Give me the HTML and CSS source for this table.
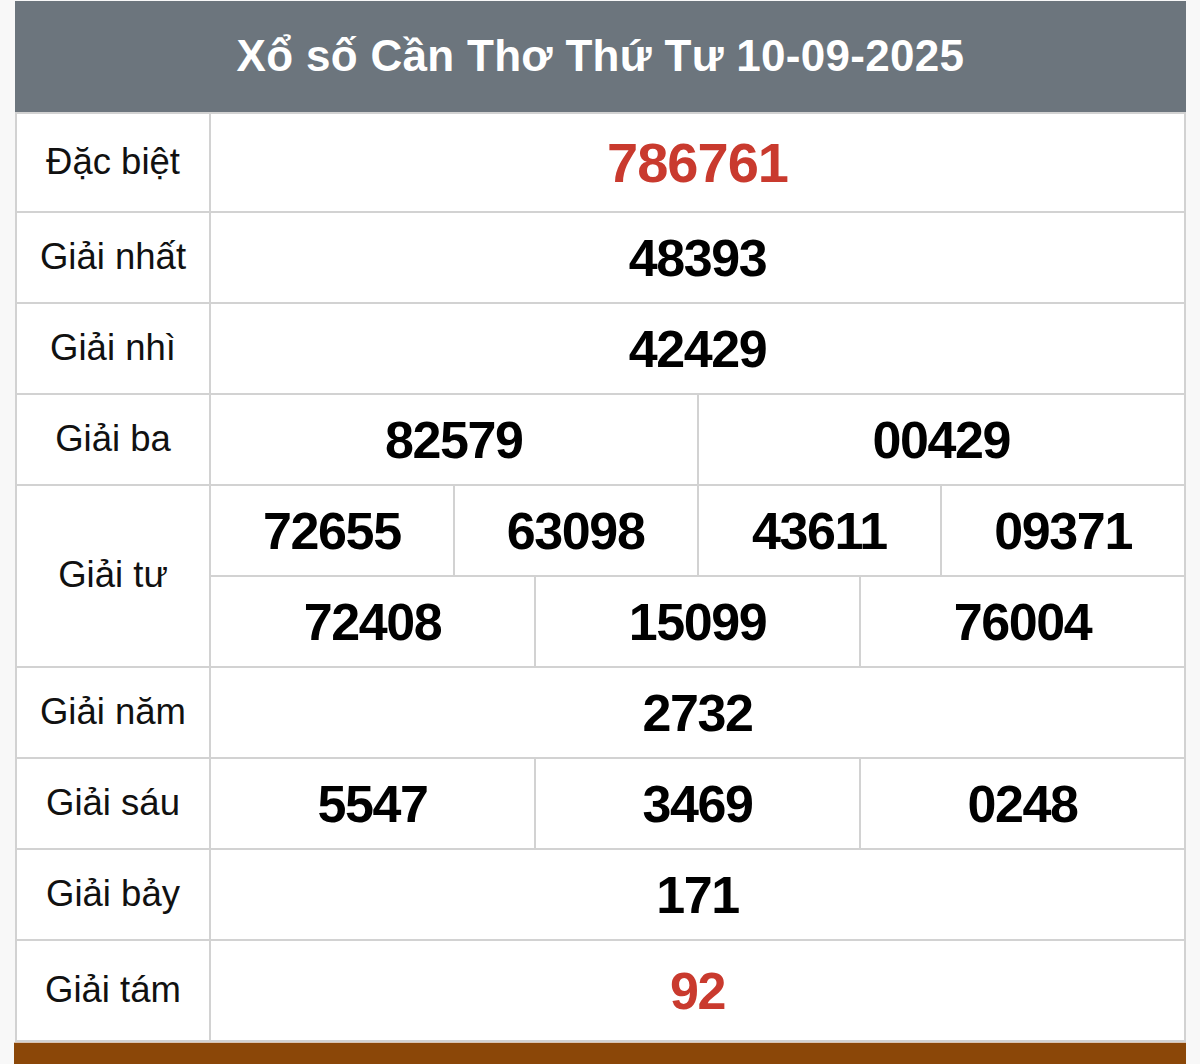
FILE: index.html
```html
<!DOCTYPE html>
<html lang="vi">
<head>
<meta charset="utf-8">
<title>Xổ số Cần Thơ</title>
<link rel="stylesheet" href="styles.css">
</head>
<body>
<div class="wrap">
  <div class="title">Xổ số Cần Thơ Thứ Tư 10-09-2025</div>
  <div class="board">
    <div class="lbl r1">Đặc biệt</div>
    <div class="val s12 red big">786761</div>

    <div class="lbl">Giải nhất</div>
    <div class="val s12">48393</div>

    <div class="lbl">Giải nhì</div>
    <div class="val s12">42429</div>

    <div class="lbl">Giải ba</div>
    <div class="val s6">82579</div>
    <div class="val s6">00429</div>

    <div class="lbl span2">Giải tư</div>
    <div class="val s3">72655</div>
    <div class="val s3">63098</div>
    <div class="val s3">43611</div>
    <div class="val s3">09371</div>
    <div class="val s4">72408</div>
    <div class="val s4">15099</div>
    <div class="val s4">76004</div>

    <div class="lbl">Giải năm</div>
    <div class="val s12">2732</div>

    <div class="lbl">Giải sáu</div>
    <div class="val s4">5547</div>
    <div class="val s4">3469</div>
    <div class="val s4">0248</div>

    <div class="lbl">Giải bảy</div>
    <div class="val s12">171</div>

    <div class="lbl">Giải tám</div>
    <div class="val s12 red">92</div>
  </div>
  <div class="bar"></div>
</div>
</body>
</html>
```

FILE: styles.css
```css
html, body {
  margin: 0;
  padding: 0;
  background: #f8f8f8;
  font-family: "Liberation Sans", Arial, sans-serif;
  height: 1064px;
  overflow: hidden;
}

.wrap {
  margin: 1px 14px 0 15px;
  width: 1171px;
}

.title {
  height: 111px;
  background: #6c757d;
  color: #ffffff;
  font-weight: bold;
  font-size: 44px;
  letter-spacing: 0.3px;
  display: flex;
  align-items: center;
  justify-content: center;
  padding-bottom: 2px;
  box-sizing: border-box;
}

.board {
  display: grid;
  grid-template-columns: 192px repeat(12, 1fr);
  grid-template-rows: 97px repeat(8, 89px) 99px;
  gap: 2px;
  padding: 2px;
  background: #d2d2d2;
}

.lbl,
.val {
  background: #ffffff;
  display: flex;
  align-items: center;
  justify-content: center;
  color: #111111;
}

.lbl {
  font-size: 36.5px;
  padding-bottom: 2px;
  box-sizing: border-box;
}

.span2 {
  grid-row: span 2;
}

.val {
  font-weight: bold;
  font-size: 52px;
  letter-spacing: -1.4px;
  color: #000000;
}

.s12 { grid-column: span 12; }
.s6 { grid-column: span 6; }
.s4 { grid-column: span 4; }
.s3 { grid-column: span 3; }

.red {
  color: #c93a2e;
}

.big {
  font-size: 56px;
  letter-spacing: -1px;
}

.bar {
  margin-left: -1px;
  height: 40px;
  background: #8b4708;
  border-top: 1px solid #d9c3b2;
}
```
